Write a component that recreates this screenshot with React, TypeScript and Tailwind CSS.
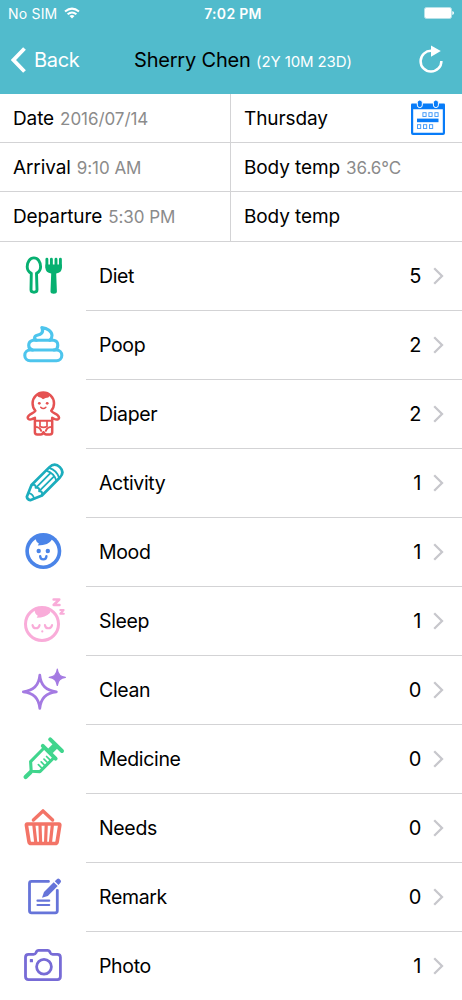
import React from "react";
import { twMerge } from "tailwind-merge";

const DietIcon = () => (
    <svg viewBox="0 0 48 48" className="size-12" fill="none" stroke="#07b071" strokeWidth="2.9" strokeLinecap="round" strokeLinejoin="round">
        <path d="M12.3 21.4C9.6 20 8.2 17.8 8.2 14.8C8.2 10 10.8 5.9 14.9 5.9S21.6 10 21.6 14.8C21.6 17.8 20.2 20 17.5 21.4L18 37.8Q18 40.2 15 40.2T12 37.8Z" />
        <path d="M27.9 7.3V15.5M32.4 7.3V15.5M37 7.3V15.5M41.4 7.3V15.5" strokeWidth="2.9" />
        <path d="M26.5 12.5H42.8V16Q42.8 20.5 37.2 21.5L37.9 39.5Q37.8 41.7 34.7 41.7T31.5 39.5L32.2 21.5Q26.5 20.5 26.5 16Z" fill="#07b071" stroke="none" />
    </svg>
);

const PoopIcon = () => (
    <svg viewBox="0 0 48 48" className="size-12" fill="none" stroke="#4dc5ed" strokeWidth="3.1" strokeLinecap="round" strokeLinejoin="round">
        <rect x="5.8" y="29" width="37" height="10.7" rx="5.3" />
        <path d="M13.5 29Q9.7 28 9.7 24.2T14 19.3H34.6Q38.8 20 38.8 24.2T35 29" />
        <path d="M17.5 19.2C14.5 18.2 15.2 14.8 18.2 14.2C22 13.5 25.2 11.5 22.8 6.6C28.5 7 33 10.5 33 14.5Q33 17.5 30.8 19.2" />
    </svg>
);

const DiaperIcon = () => (
    <svg viewBox="0 0 48 48" className="size-12" fill="none" stroke="#e55252" strokeWidth="2.5" strokeLinecap="round" strokeLinejoin="round">
        <path d="M16.4 20.8A10.7 10.9 0 1 1 32.2 20.8C33.2 22.8 37 23.6 39 25.6Q40.8 27.6 39.4 29Q37.8 30.2 35.5 29L33.2 27.8V42.3Q33 44.4 30.8 44.4H27.3Q25.2 44.4 24.5 42.2Q23.7 44.4 21.7 44.4H18.2Q15.9 44.4 15.9 42.2V27.8L13.2 29Q10.8 30.2 9.3 28.8Q8 27.4 9.8 25.6C11.8 23.6 15.4 22.8 16.4 20.8Z" />
        <path d="M17 4.8Q24.3 .2 31.6 4.8L29.3 7.4Q26.5 7.5 24 9.2Q22.3 7.4 19.5 7Z" fill="#e55252" stroke="none" />
        <circle cx="20.3" cy="13.3" r="1.4" fill="#e55252" stroke="none" />
        <circle cx="28.2" cy="13.3" r="1.4" fill="#e55252" stroke="none" />
        <path d="M21.7 17.2Q24.3 19.7 26.9 17.2" strokeWidth="1.5" />
        <path d="M16 30.8H33M16 36.9Q20.8 37 22.2 40.8M33 36.9Q28.2 37 26.8 40.8" strokeWidth="1.9" />
        <path d="M21 31V36.4M28 31V36.4M21 36.6Q24.5 38.2 28 36.6" strokeWidth="1.7" />
    </svg>
);

const PencilIcon = () => (
    <svg viewBox="0 0 48 48" className="size-12" fill="none" stroke="#1cadbd" strokeWidth="2.7" strokeLinecap="round" strokeLinejoin="round">
        <g transform="translate(8.9 40.1) rotate(-45)">
            <path d="M.9 -2.4L12.5 -7.4H37.5Q45.2 -7.4 45.2 0T37.5 7.4H12.5L.9 2.4Q-.9 0 .9 -2.4Z" />
            <path d="M12.5 -7.2Q16.5 -5 13.5 -2.5Q17 0 13.5 2.5Q16.5 5 12.5 7.2" strokeWidth="2" />
            <path d="M15 -2.4H33.5M15 2.4H33.5M33 -7.2Q37 0 33 7.2M37 -7.2Q41 0 37 7.2" strokeWidth="1.8" />
            <path d="M5 -3.6Q7.2 0 5 3.6" strokeWidth="1.8" />
        </g>
    </svg>
);

const MoodIcon = () => (
    <svg viewBox="0 0 48 48" className="size-12" fill="none" stroke="#4a84e8" strokeLinecap="round">
        <circle cx="24.3" cy="23" r="18" fill="#4a84e8" stroke="none" />
        <path d="M16.6 11.3C10 16 8 24 12 30.4A14.3 14.3 0 0 0 36.6 30.4C40.6 24 38.5 16 32.8 11.8Q30 17.2 18.8 17.5L19.9 15.5Q17.2 14.2 16.6 11.3Z" fill="#fff" stroke="none" />
        <circle cx="19.7" cy="23" r="2.2" fill="#4a84e8" stroke="none" />
        <circle cx="28.8" cy="23" r="2.2" fill="#4a84e8" stroke="none" />
        <path d="M21.2 28.3Q21.3 31.4 24.3 31.4T27.4 28.3" strokeWidth="2.4" />
    </svg>
);

const SleepIcon = () => (
    <svg viewBox="0 0 48 48" className="size-12" fill="none" stroke="#f9acd9" strokeLinecap="round" strokeLinejoin="round">
        <circle cx="23" cy="27" r="16.5" strokeWidth="3" />
        <path d="M15.5 12.5Q23 8.5 30.5 12.5L31.2 15.7Q26.5 20.6 17.7 20.8L18.8 18.7Q15.8 17.2 15.5 12.5Z" fill="#f9acd9" stroke="none" />
        <path d="M13.5 28Q14 31.3 17 31.3T20.6 28M25.9 28Q26.3 31.3 29.4 31.3T33.1 28" strokeWidth="2.1" />
        <circle cx="23.3" cy="34.4" r="1.1" fill="#f9acd9" stroke="none" />
        <path d="M34.6 2.5H40.3L34.6 8H40.5" strokeWidth="2.5" />
        <path d="M41.3 13H44.6L41.3 16.7H44.8" strokeWidth="2.1" />
    </svg>
);

const CleanIcon = () => (
    <svg viewBox="0 0 48 48" className="size-12" fill="none" stroke="#a47ae2" strokeWidth="2.7" strokeLinecap="round" strokeLinejoin="round">
        <path d="M20.8 9.2C21.6 19 27.5 24.8 37.4 25.8C27.5 26.8 21.6 32.6 20.8 42.4C20 32.6 14.1 26.8 4.3 25.8C14.1 24.8 20 19 20.8 9.2Z" />
        <path d="M38.3 3.2C38.8 8.2 41.6 10.8 46.4 11.3C41.6 11.8 38.8 14.4 38.3 19.4C37.8 14.4 35 11.8 30.2 11.3C35 10.8 37.8 8.2 38.3 3.2Z" fill="#a47ae2" strokeWidth="1.3" />
    </svg>
);

const MedicineIcon = () => (
    <svg viewBox="0 0 48 48" className="size-12" fill="none" stroke="#40d58d" strokeLinecap="round" strokeLinejoin="round">
        <path d="M6.6 42.1L11.5 37.2" strokeWidth="4.2" />
        <path d="M31.2 4.4L43 16" strokeWidth="4" />
        <path d="M37 10.2L31.3 16" strokeWidth="6.4" strokeLinecap="butt" />
        <path d="M23.8 10.8L36.6 23.6" strokeWidth="4" />
        <path d="M25 13L11.6 26.6L12.2 36.2L20.9 36.6L34.6 23" strokeWidth="3.1" />
        <path d="M25 24.1L28.4 27.5M22.2 26.9L25.6 30.3M19.4 29.7L22.8 33.1M27.6 21.5L31 24.9" strokeWidth="1.7" />
    </svg>
);

const NeedsIcon = () => (
    <svg viewBox="0 0 48 48" className="size-12" fill="none" stroke="#f37467" strokeLinecap="round" strokeLinejoin="round">
        <path d="M14.4 16L24 6.9L33.6 16" strokeWidth="3.4" />
        <path d="M8.2 20H40Q41 20 40.8 21.3L38.2 37.6Q37.9 39.5 36 39.5H12.2Q10.3 39.5 10 37.6L7.4 21.3Q7.2 20 8.2 20Z" strokeWidth="3.6" />
        <path d="M14.9 21.5L16.7 38M21 21.5L21.6 38M27.2 21.5L26.6 38M33.3 21.5L31.5 38" strokeWidth="3.2" />
    </svg>
);

const RemarkIcon = () => (
    <svg viewBox="0 0 48 48" className="size-12" fill="none" stroke="#6674d9" strokeWidth="2.8" strokeLinecap="round" strokeLinejoin="round">
        <path d="M29.5 8.4H12.5Q10.5 8.4 10.5 10.4V37.8Q10.5 39.8 12.5 39.8H36.3Q38.3 39.8 38.3 37.8V17.3" />
        <path d="M18.5 27.7H30.2M18.5 32H30.2" strokeWidth="2.2" />
        <path d="M23 24.8L25 19L34.7 9.3L38.7 13.1L28.8 22.9Z" fill="#6674d9" stroke="none" />
        <path d="M35.8 8.3L38.1 6Q39.3 5 40.4 6L41.6 7.2Q42.6 8.3 41.6 9.4L39.5 11.9Z" fill="#6674d9" stroke="none" />
    </svg>
);

const PhotoIcon = () => (
    <svg viewBox="0 0 48 48" className="size-12" fill="none" stroke="#776bd6" strokeWidth="2.8" strokeLinejoin="round">
        <path d="M9.5 12.3H14.5Q16.3 12.3 17 10.7Q17.8 8.4 19.7 8.4H28.5Q30.4 8.4 31.2 10.7Q31.9 12.3 33.7 12.3H38.4Q41.4 12.3 41.4 15.3V34.6Q41.4 37.6 38.4 37.6H9.5Q6.5 37.6 6.5 34.6V15.3Q6.5 12.3 9.5 12.3Z" />
        <circle cx="25" cy="24.7" r="7.4" />
        <rect x="10.8" y="17.1" width="3.2" height="3.2" rx=".6" fill="#776bd6" stroke="none" />
    </svg>
);

const CalendarIcon = () => (
    <svg viewBox="0 0 34 35" className="w-[34px] h-[35px]" fill="none" stroke="#087cf8">
        <path d="M1 3.6H33Q34 3.6 34 5V33Q34 35 32 35H2Q0 35 0 33V5Q0 3.6 1 3.6ZM2.2 9.3V32.7H31.8V9.3Z" fill="#087cf8" fillRule="evenodd" stroke="none" />
        <rect x="6.3" y="0" width="5" height="7.6" rx="2.5" fill="#087cf8" stroke="#fff" />
        <rect x="22.4" y="0" width="5" height="7.6" rx="2.5" fill="#087cf8" stroke="#fff" />
        <path d="M6 18.6H27.5V22.2H6Z" fill="#087cf8" stroke="none" />
        <g strokeWidth=".9" opacity=".8">
            <rect x="11.9" y="12.7" width="3.2" height="3.8" />
            <rect x="17.9" y="12.7" width="3.2" height="3.8" />
            <rect x="23.9" y="12.7" width="3.2" height="3.8" />
            <rect x="6.5" y="24.7" width="3.2" height="3.8" />
            <rect x="12.5" y="24.7" width="3.2" height="3.8" />
            <rect x="18.5" y="24.7" width="3.2" height="3.8" />
        </g>
    </svg>
);

const records = [
    { name: "Diet", count: 5, icon: <DietIcon /> },
    { name: "Poop", count: 2, icon: <PoopIcon /> },
    { name: "Diaper", count: 2, icon: <DiaperIcon /> },
    { name: "Activity", count: 1, icon: <PencilIcon /> },
    { name: "Mood", count: 1, icon: <MoodIcon /> },
    { name: "Sleep", count: 1, icon: <SleepIcon /> },
    { name: "Clean", count: 0, icon: <CleanIcon /> },
    { name: "Medicine", count: 0, icon: <MedicineIcon /> },
    { name: "Needs", count: 0, icon: <NeedsIcon /> },
    { name: "Remark", count: 0, icon: <RemarkIcon /> },
    { name: "Photo", count: 1, icon: <PhotoIcon /> },
];

const details = [
    { label: "Date", value: "2016/07/14" },
    { label: "Thursday", icon: <CalendarIcon /> },
    { label: "Arrival", value: "9:10 AM" },
    { label: "Body temp", value: "36.6°C" },
    { label: "Departure", value: "5:30 PM" },
    { label: "Body temp" },
];

const Header = () => (
    <header className="h-[94px] bg-[#51bbcc] text-white">
        <div className="grid grid-cols-3 items-center h-[26px] px-2">
            <div className="flex items-center gap-[7px] text-[14px] tracking-[0.2px]">
                No SIM
                <svg viewBox="0 0 16 12" className="w-4 h-3" fill="none" stroke="#fff" strokeWidth="2">
                    <path d="M1 4.6Q8 -1.4 15 4.6M3.6 7.3Q8 3.6 12.4 7.3" />
                    <path d="M5.5 9Q8 7 10.5 9L8 11.6Z" fill="#fff" stroke="none" />
                </svg>
            </div>
            <span className="pl-1 text-center text-[14px] font-semibold tracking-[0.3px]">7:02 PM</span>
            <svg viewBox="0 0 30 12" className="w-[30px] h-3 justify-self-end">
                <rect x=".5" y=".5" width="27" height="11" rx="2" fill="#fff" stroke="#b5e1e8" />
                <path d="M28.3 4Q30 4.3 30 6T28.3 8Z" fill="#fff" />
            </svg>
        </div>
        <div className="flex items-center h-[68px] pl-[11px] pr-[19px]">
            <svg viewBox="0 0 15 26" className="w-[15px] h-[26px]" fill="none" stroke="#fff" strokeWidth="3.8">
                <path d="M13.5 1.5L2.5 13L13.5 24.5" />
            </svg>
            <span className="ml-2 w-[100px] text-[20px] tracking-[-0.3px]">Back</span>
            <h1 className="flex-1 text-[20px] text-black tracking-[-0.2px] whitespace-nowrap">
                Sherry Chen <span className="text-[15px] text-white tracking-[-0.1px]">(2Y 10M 23D)</span>
            </h1>
            <svg viewBox="0 0 24 28" className="w-6 h-7 mb-[3px]" fill="none" stroke="#fff" strokeWidth="2.5">
                <path d="M12.5 5.8A10.4 10.4 0 1 0 22.4 16" />
                <path d="M12 .5L21.8 6L12 11.8Z" fill="#fff" stroke="none" />
            </svg>
        </div>
    </header>
);

const App = () => {
    return (
        <div className="w-[462px] h-[1000px] overflow-hidden bg-white text-black font-['Inter',sans-serif]">
            <Header />
            <div className="grid grid-cols-[231px_231px]">
                {details.map((item, index) => (
                    <div
                        key={index}
                        className={twMerge(
                            "flex items-center justify-between h-[49px] pl-[13px] pr-[17px] border-b border-[#d3d3d5] text-[19px] tracking-[-0.1px]",
                            index % 2 === 0 && "border-r",
                            index > 3 && "h-[50px]"
                        )}
                    >
                        <div className={twMerge("flex items-baseline gap-[6px] pt-[3px]", index > 3 && "pt-[2px]")}>
                            {item.label}
                            {item.value && (
                                <span className="text-[17px] text-[#8b8b8b] tracking-[-0.05px]">{item.value}</span>
                            )}
                        </div>
                        {item.icon && <span className="pb-[2px]">{item.icon}</span>}
                    </div>
                ))}
            </div>
            {records.map(item => (
                <div key={item.name} className="flex h-[69px] cursor-pointer">
                    <span className="w-[86px] pl-[19px] pt-[10px]">{item.icon}</span>
                    <div className="flex flex-1 items-center border-b border-[#d3d3d5] pl-[13px] pr-[18px] text-[19.5px] tracking-[-0.35px]">
                        <span className="flex-1 pt-[2px]">{item.name}</span>
                        <span className="text-[20px]">{item.count}</span>
                        <svg viewBox="0 0 11 18" className="ml-[12px] w-[11px] h-[18px]" fill="none" stroke="#c7c7cc" strokeWidth="2.3">
                            <path d="M1.2 1.2L9 9L1.2 16.8" />
                        </svg>
                    </div>
                </div>
            ))}
        </div>
    );
};

export default App;
